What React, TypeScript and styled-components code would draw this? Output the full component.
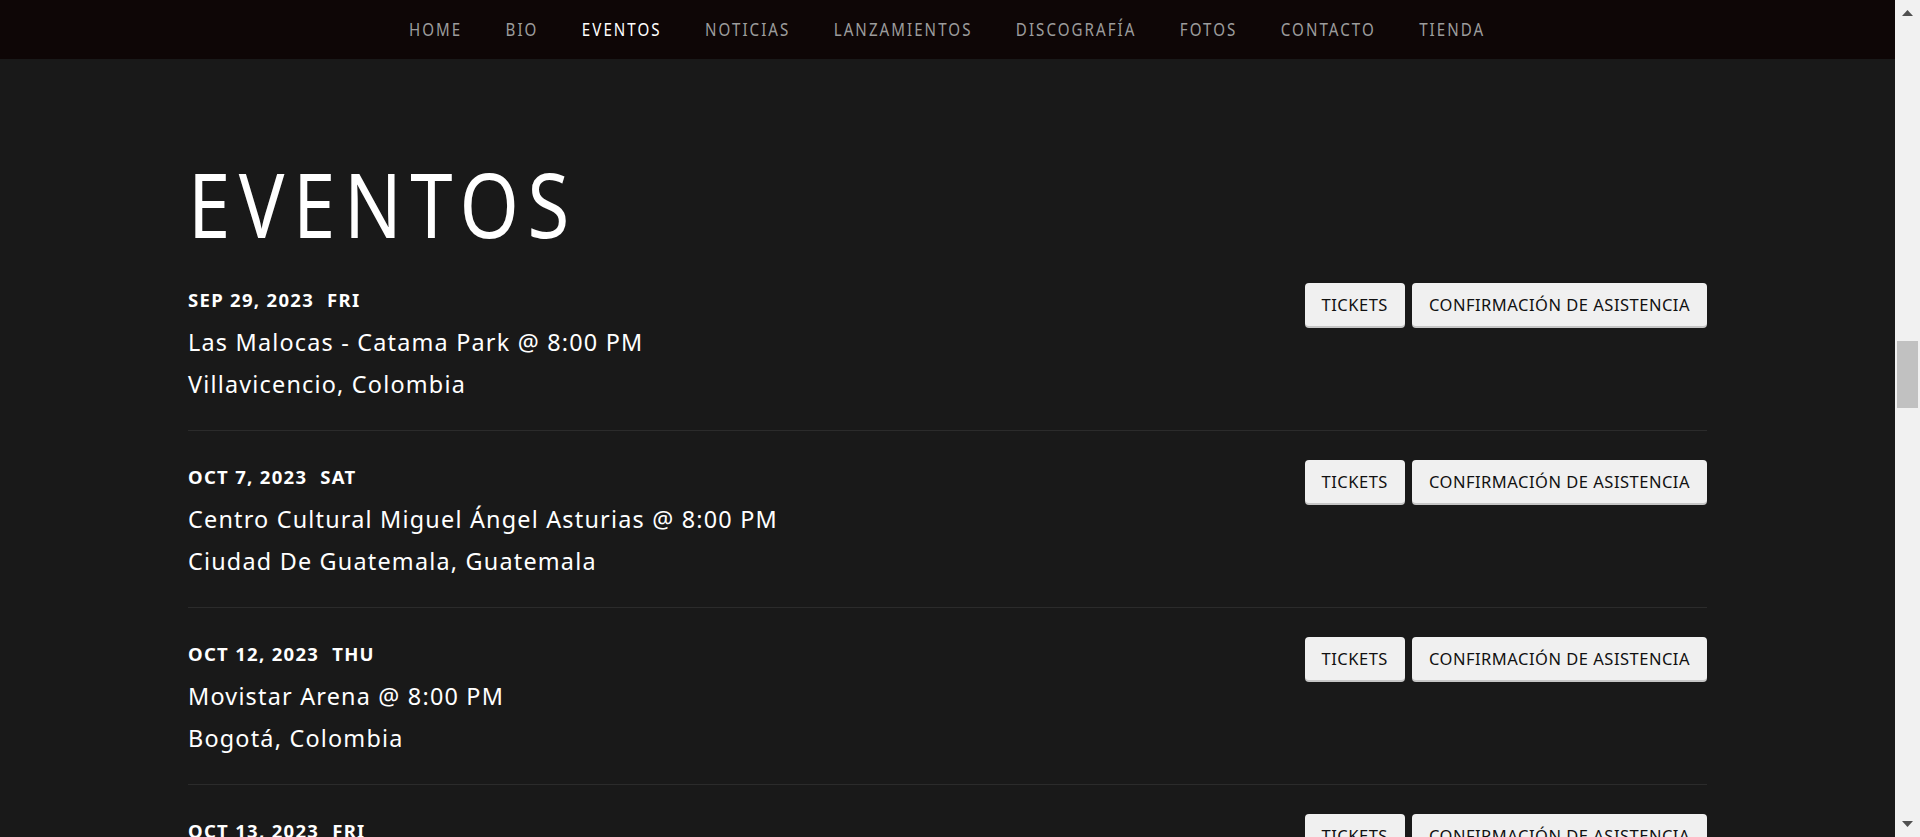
import React from "react";
import styled, { createGlobalStyle } from "styled-components";

const GlobalStyle = createGlobalStyle`
  html, body {
    margin: 0;
    padding: 0;
    background: #191919;
    overflow: hidden;
  }
  body {
    font-family: "Noto Sans", "Open Sans", sans-serif;
    color: #ffffff;
  }
`;

const Page = styled.div`
  display: flex;
  height: 100vh;
  overflow: hidden;
`;

const Viewport = styled.div`
  flex: 1;
  min-width: 0;
  overflow: hidden;
`;

const Scrollbar = styled.div`
  width: 25px;
  flex: none;
  background: #f1f1f1;
  display: flex;
  flex-direction: column;
  align-items: center;
`;

const ScrollArrow = styled.div<{ $down?: boolean }>`
  height: 25px;
  width: 100%;
  display: flex;
  align-items: ${(p) => (p.$down ? "flex-end" : "flex-start")};
  justify-content: center;
  padding: ${(p) => (p.$down ? "0 0 10px" : "10px 0 0")};
  box-sizing: border-box;
`;

const Thumb = styled.div`
  width: 21px;
  height: 67px;
  margin-top: 316px;
  background: #c1c1c1;
`;

const Spacer = styled.div`
  flex: 1;
`;

const Header = styled.header`
  height: 59px;
  background: #0e0606;
  display: flex;
  align-items: center;
  justify-content: center;
`;

/* the site's nav face is a condensed grotesque; Noto Sans is narrowed to match */
const Nav = styled.nav`
  display: flex;
  align-items: center;
  gap: 51px;
  transform: scaleX(0.85);
  transform-origin: center;
`;

const NavItem = styled.a<{ $active?: boolean }>`
  font-family: "Noto Sans", sans-serif;
  font-size: 17.8px;
  letter-spacing: 2.4px;
  text-transform: uppercase;
  text-decoration: none;
  color: ${(p) => (p.$active ? "#ffffff" : "#9c9c9c")};
  line-height: 1;
`;

const Main = styled.main`
  padding: 94px 0 60px;
`;

const Container = styled.div`
  width: 1519px;
  margin: 0 auto;
`;

const Title = styled.h1`
  margin: 0;
  font-family: "Noto Sans", sans-serif;
  font-weight: 400;
  font-size: 89.6px;
  line-height: 101px;
  letter-spacing: 10px;
  color: #ffffff;
  transform: scaleX(0.85);
  transform-origin: left center;
`;

const List = styled.ul`
  list-style: none;
  margin: 0;
  padding: 0;
`;

const Row = styled.li`
  display: flex;
  justify-content: space-between;
  align-items: flex-start;
  padding: 25px 0;
  border-bottom: 1px solid #2b2b2b;
`;

const Info = styled.div`
  display: flex;
  flex-direction: column;
`;

const DateLine = styled.div`
  font-size: 18.5px;
  font-weight: 700;
  line-height: 42px;
  letter-spacing: 1.3px;
  text-transform: uppercase;
  color: #ffffff;
`;

const Weekday = styled.span`
  margin-left: 13px;
`;

const Line = styled.div`
  font-size: 23.4px;
  line-height: 42px;
  letter-spacing: 1.2px;
  color: #ffffff;
`;

const Actions = styled.div`
  display: flex;
  gap: 7px;
  margin-top: 4px;
`;

const Button = styled.a`
  display: inline-flex;
  align-items: center;
  height: 43px;
  padding: 0 17px;
  background: #f0f0f0;
  color: #111111;
  border-radius: 4px;
  box-shadow: 0 2px 0 #c6c6c6;
  font-family: "Noto Sans", "Open Sans", sans-serif;
  font-size: 16.5px;
  letter-spacing: 0.5px;
  text-transform: uppercase;
  text-decoration: none;
  white-space: nowrap;
`;

const navItems = [
  "Home",
  "Bio",
  "Eventos",
  "Noticias",
  "Lanzamientos",
  "Discografía",
  "Fotos",
  "Contacto",
  "Tienda",
];

const events = [
  {
    date: "Sep 29, 2023",
    day: "Fri",
    venue: "Las Malocas - Catama Park @ 8:00 PM",
    city: "Villavicencio, Colombia",
  },
  {
    date: "Oct 7, 2023",
    day: "Sat",
    venue: "Centro Cultural Miguel Ángel Asturias @ 8:00 PM",
    city: "Ciudad De Guatemala, Guatemala",
  },
  {
    date: "Oct 12, 2023",
    day: "Thu",
    venue: "Movistar Arena @ 8:00 PM",
    city: "Bogotá, Colombia",
  },
  {
    date: "Oct 13, 2023",
    day: "Fri",
    venue: "Movistar Arena @ 8:00 PM",
    city: "Bogotá, Colombia",
  },
];

const Triangle = ({ down }: { down?: boolean }) => (
  <svg width="11" height="6" viewBox="0 0 11 6" aria-hidden="true">
    <polygon
      points={down ? "0,0 11,0 5.5,6" : "5.5,0 11,6 0,6"}
      fill="#505050"
    />
  </svg>
);

export default function App() {
  return (
    <>
      <GlobalStyle />
      <Page>
        <Viewport>
          <Header>
            <Nav>
              {navItems.map((n) => (
                <NavItem key={n} href="#" $active={n === "Eventos"}>
                  {n}
                </NavItem>
              ))}
            </Nav>
          </Header>
          <Main>
            <Container>
              <Title>EVENTOS</Title>
              <List>
                {events.map((e, i) => (
                  <Row key={i}>
                    <Info>
                      <DateLine>
                        {e.date}
                        <Weekday>{e.day}</Weekday>
                      </DateLine>
                      <Line>{e.venue}</Line>
                      <Line>{e.city}</Line>
                    </Info>
                    <Actions>
                      <Button href="#">Tickets</Button>
                      <Button href="#">Confirmación de asistencia</Button>
                    </Actions>
                  </Row>
                ))}
              </List>
            </Container>
          </Main>
        </Viewport>
        <Scrollbar>
          <ScrollArrow>
            <Triangle />
          </ScrollArrow>
          <Thumb />
          <Spacer />
          <ScrollArrow $down>
            <Triangle down />
          </ScrollArrow>
        </Scrollbar>
      </Page>
    </>
  );
}
